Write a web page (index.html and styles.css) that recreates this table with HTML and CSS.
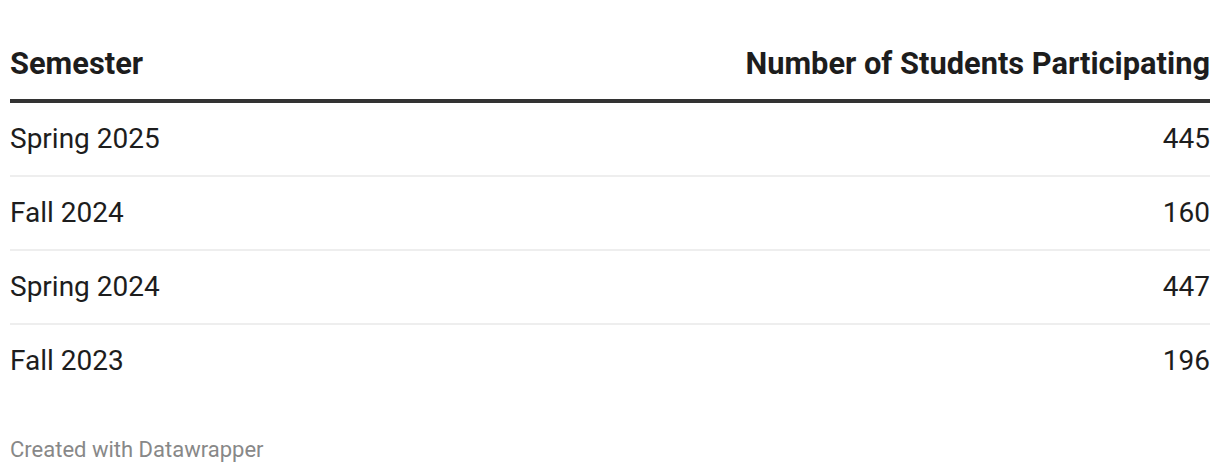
FILE: index.html
```html
<!DOCTYPE html>
<html>
<head>
<meta charset="utf-8">
<link rel="stylesheet" href="styles.css">
</head>
<body>
<div class="chart">
  <table class="table">
    <thead>
      <tr>
        <th class="left">Semester</th>
        <th class="right">Number of Students Participating</th>
      </tr>
    </thead>
    <tbody>
      <tr><td class="left">Spring 2025</td><td class="right">445</td></tr>
      <tr><td class="left">Fall 2024</td><td class="right">160</td></tr>
      <tr><td class="left">Spring 2024</td><td class="right">447</td></tr>
      <tr class="last"><td class="left">Fall 2023</td><td class="right">196</td></tr>
    </tbody>
  </table>
  <div class="footer">Created with Datawrapper</div>
</div>
</body>
</html>
```

FILE: styles.css
```css
html, body {
  margin: 0;
  padding: 0;
  background: #ffffff;
}
.chart {
  padding: 46px 10px 0 10px;
  font-family: Roboto, "Liberation Sans", sans-serif;
  color: #1d1d1d;
}
.table {
  width: 100%;
  border-collapse: collapse;
}
.table th {
  font-size: 30.8px;
  font-weight: 700;
  line-height: 36px;
  padding: 0 0 17px 0;
  border-bottom: 4px solid #333333;
  color: #1d1d1d;
}
.table td {
  font-size: 28px;
  font-weight: 400;
  line-height: 34px;
  padding: 19px 0;
  border-bottom: 2px solid #eeeeee;
}
.table tr.last td {
  border-bottom: none;
}
.left { text-align: left; }
.right { text-align: right; }
.footer {
  margin-top: 40px;
  font-size: 22px;
  line-height: 26px;
  color: #888888;
}
```
